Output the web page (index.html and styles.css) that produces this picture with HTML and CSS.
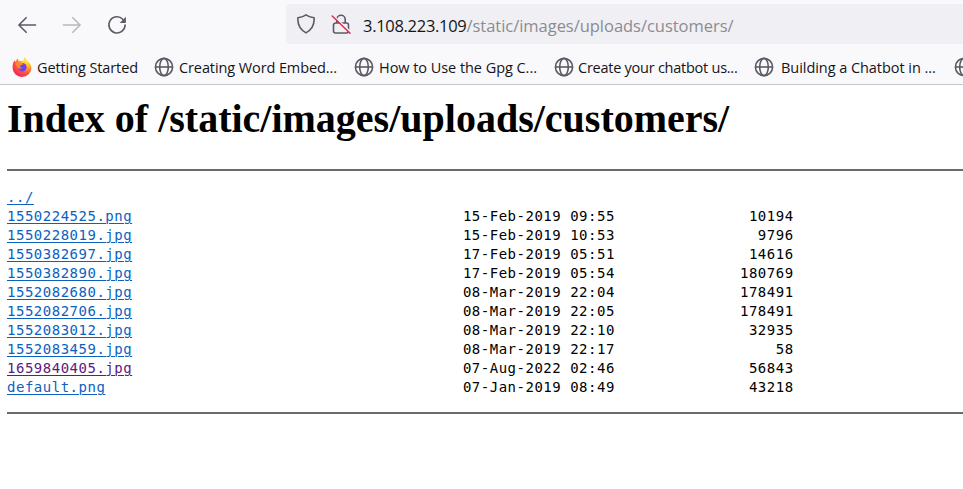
FILE: index.html
```
<!DOCTYPE html>
<html lang="en">
<head>
<meta charset="utf-8">
<title>Index of /static/images/uploads/customers/</title>
<link rel="stylesheet" href="styles.css">
</head>
<body>
<header class="chrome">
  <div class="toolbar">
    <nav class="nav">
      <svg class="icon" viewBox="0 0 20 20"><path class="line" d="M18.500 10H2M9.200 2.700 1.900 10l7.300 7.300"/></svg>
      <svg class="icon icon-off" viewBox="0 0 20 20"><path class="line" d="M1.500 10H18M10.800 2.700l7.300 7.300-7.300 7.300"/></svg>
      <svg class="icon" viewBox="0 0 20 20"><path class="line" d="M15.800 4.200A8.100 8.100 0 1 0 18.100 10"/><path class="solid" d="M18.900 1.700v5.600a.6.6 0 0 1-.6.6h-5.600z"/></svg>
    </nav>
    <div class="urlbar">
      <svg class="icon" viewBox="0 0 20 20"><path class="line" d="M10 .9c2 1.500 5 2.400 8.100 2.900.4 5.700-1.700 11.500-8.100 15.100C3.600 15.300 1.500 9.500 1.900 3.800 5 3.300 8 2.400 10 .9z"/></svg>
      <svg class="icon" viewBox="0 0 20 20"><path class="line" d="M5.800 9V5.500a4.200 4.200 0 0 1 8.400 0V9M4.500 9h11a2 2 0 0 1 2 2v6a2 2 0 0 1-2 2h-11a2 2 0 0 1-2-2v-6a2 2 0 0 1 2-2z"/><path class="halo" d="M2 1.300 19.600 18"/><path class="slash" d="M1.200 2 19 19.200"/></svg>
      <span class="url"><span class="host">3.108.223.109</span>/static/images/uploads/customers/</span>
    </div>
  </div>
  <div class="bookmarks">
    <span class="bookmark first"><svg class="mark" viewBox="0 0 20 20">
      <defs>
        <radialGradient id="flame" cx=".75" cy=".15" r=".95">
          <stop offset="0" stop-color="#fff04a"/>
          <stop offset=".35" stop-color="#ffb52e"/>
          <stop offset=".65" stop-color="#ff5b36"/>
          <stop offset="1" stop-color="#ee1b63"/>
        </radialGradient>
        <symbol id="globe" viewBox="0 0 20 20">
          <g fill="none" stroke="#5b5b66" stroke-width="1.6">
            <circle cx="10" cy="10" r="8.6"/>
            <ellipse cx="10" cy="10" rx="4.3" ry="8.6"/>
            <path d="M1.400 10h17.200"/>
          </g>
        </symbol>
      </defs>
      <path fill="url(#flame)" d="M1 6.500 2.400 3.300l1.300 1.600C4.300 3.200 5 2.200 6 1.500l.5 2.600c2-.5 3.600-.2 5 .5C11.300 2.600 12 1.200 13.200.200c.3 1.800 1.600 2.900 2.900 4.200 2 1.800 3.300 4 3.300 6.700a9.400 8.800 0 0 1-18.800 0C.5 9.500.6 8 1 6.500z"/><circle cx="10.400" cy="10.300" r="4.200" fill="#7542e5"/><path fill="#ff8a2b" d="M3.500 6.500c1.500-1.600 4-1.900 6-.8l2 1.400c-1.300 1.200-2.800.8-3.300 1.700-.5 1 .4 2.300 2 2.300-1.500 1.300-3.600.6-4.600-.5z"/></svg><span class="t1">Getting Started</span></span>
    <span class="bookmark"><svg class="mark"><use href="#globe"/></svg><span class="t2">Creating Word Embed...</span></span>
    <span class="bookmark"><svg class="mark"><use href="#globe"/></svg><span class="t3">How to Use the Gpg C...</span></span>
    <span class="bookmark"><svg class="mark"><use href="#globe"/></svg><span class="t4">Create your chatbot us...</span></span>
    <span class="bookmark"><svg class="mark"><use href="#globe"/></svg><span class="t5">Building a Chatbot in ...</span></span>
    <span class="bookmark"><svg class="mark"><use href="#globe"/></svg></span>
  </div>
</header>
<main>
<h1>Index of /static/images/uploads/customers/</h1>
<hr>
<pre><a href="#">../</a>
<a href="#">1550224525.png</a>                                     15-Feb-2019 09:55               10194
<a href="#">1550228019.jpg</a>                                     15-Feb-2019 10:53                9796
<a href="#">1550382697.jpg</a>                                     17-Feb-2019 05:51               14616
<a href="#">1550382890.jpg</a>                                     17-Feb-2019 05:54              180769
<a href="#">1552082680.jpg</a>                                     08-Mar-2019 22:04              178491
<a href="#">1552082706.jpg</a>                                     08-Mar-2019 22:05              178491
<a href="#">1552083012.jpg</a>                                     08-Mar-2019 22:10               32935
<a href="#">1552083459.jpg</a>                                     08-Mar-2019 22:17                  58
<a href="#" class="seen">1659840405.jpg</a>                                     07-Aug-2022 02:46               56843
<a href="#">default.png</a>                                        07-Jan-2019 08:49               43218
</pre>
<hr>
</main>
</body>
</html>
```
FILE: styles.css
```
body { margin: 0; background: #fff; color: #000; overflow: hidden; }
.chrome { height: 84px; background: #f9f9fb; border-bottom: 1px solid #c6c6ca; font-family: "Open Sans", sans-serif; color: #15141a; overflow: hidden; }
.toolbar { display: flex; padding-top: 4px; height: 40px; }
.nav { display: flex; align-items: center; gap: 25px; width: 269px; padding: 1px 0 0 17px; }
.icon { width: 20px; height: 20px; flex: none; }
.icon-off { opacity: .4; }
.line { fill: none; stroke: #5b5b66; stroke-width: 1.6; stroke-linecap: round; stroke-linejoin: round; }
.solid { fill: #5b5b66; }
.halo { stroke: #f0f0f4; stroke-width: 1.6; }
.slash { stroke: #e22850; stroke-width: 1.5; stroke-linecap: round; }
.urlbar { flex: 1; display: flex; align-items: center; gap: 15px; padding-left: 10px; background: #f0f0f4; border-radius: 4px 0 0 4px; }
.url { font-size: 16.5px; letter-spacing: -.03px; color: #8b8b92; margin-left: -3px; padding-top: 2px; white-space: nowrap; }
.host { color: #15141a; letter-spacing: -.3px; }
.bookmarks { display: flex; height: 40px; padding: 4px 0 0 12px; box-sizing: border-box; width: 1170px; }
.bookmark { display: flex; align-items: center; gap: 5px; width: 200px; height: 40px; margin-top: -1px; flex: none; font-size: 14.5px; white-space: nowrap; }
.first { width: 142px; }
.mark { width: 20px; height: 20px; flex: none; }
.t1, .t2 { letter-spacing: -.1px; }
.t3 { letter-spacing: -.05px; }
.t4 { letter-spacing: -.25px; margin-left: -1px; }
.t5 { letter-spacing: -.05px; margin-left: 2px; }
main { padding-left: 7px; }
h1 { margin: 10px 0 27px; font: bold 40px/47px "Liberation Serif", serif; white-space: nowrap; }
hr { margin: 0; height: 0; border: 0; border-top: 2px solid #6a6a6e; }
pre { margin: 17px 0 15px; font: 14px/19px "DejaVu Sans Mono", monospace; letter-spacing: .51px; }
a { color: #0b62be; text-decoration: underline; text-underline-offset: 2px; text-decoration-thickness: 1px; }
.seen { color: #592080; }
```
